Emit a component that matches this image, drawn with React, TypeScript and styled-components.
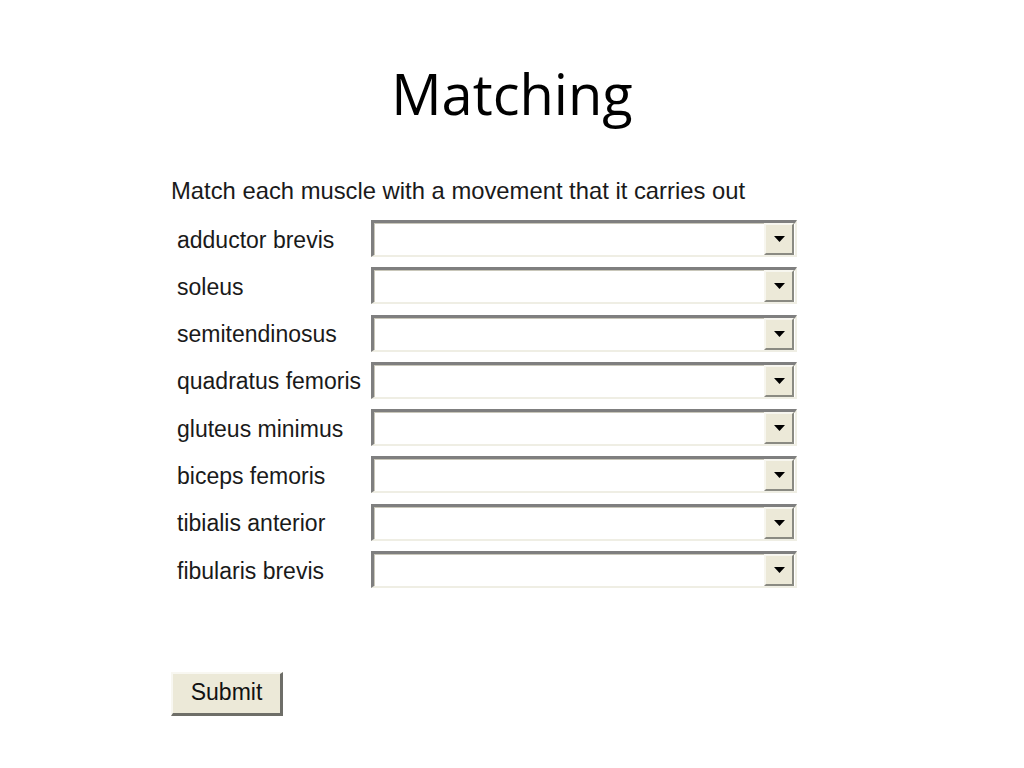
import React from "react";
import styled, { createGlobalStyle } from "styled-components";

const Global = createGlobalStyle`
  html, body { margin: 0; padding: 0; background: #ffffff; }
  body { width: 1024px; height: 768px; overflow: hidden; }
`;

const Page = styled.div`
  width: 1024px;
  height: 768px;
  display: flex;
  flex-direction: column;
`;

const Title = styled.h1`
  margin: 55px 0 0 0;
  font-family: "Open Sans", "Noto Sans", sans-serif;
  font-weight: 400;
  font-size: 56px;
  line-height: 76px;
  color: #000;
  text-align: center;
`;

const Form = styled.form`
  margin: 47px 0 0 171px;
  display: flex;
  flex-direction: column;
  font-family: "Liberation Sans", Arial, sans-serif;
  font-size: 23px;
  color: #1a1a1a;
`;

const Instruction = styled.div`
  font-size: 23.8px;
  line-height: 26px;
  height: 26px;
`;

const Grid = styled.div`
  margin-top: 16px;
  display: grid;
  grid-template-columns: 200px 426px;
  grid-auto-rows: 37px;
  row-gap: 10.3px;
`;

const Label = styled.label`
  padding-left: 6px;
  display: flex;
  align-items: center;
  padding-top: 3px;
  white-space: nowrap;
`;

const SelectBox = styled.div`
  box-sizing: border-box;
  height: 37px;
  display: flex;
  justify-content: flex-end;
  align-items: stretch;
  background: #ffffff;
  border-top: 3px solid #7f7f7f;
  border-left: 3px solid #7f7f7f;
  border-bottom: 2px solid #efeee4;
  border-right: 2px solid #efeee4;
  box-shadow: inset 1px 1px 0 #c9c7ba;
`;

const DropButton = styled.div`
  box-sizing: border-box;
  width: 30px;
  margin: 0 1px 0 0;
  background: #ece9d8;
  border-top: 2px solid #f7f6ef;
  border-left: 2px solid #f7f6ef;
  border-bottom: 2px solid #8a8a82;
  border-right: 2px solid #8a8a82;
  display: flex;
  align-items: center;
  justify-content: center;
`;

const SubmitButton = styled.button`
  margin-top: 84px;
  width: 112px;
  height: 44px;
  box-sizing: border-box;
  padding: 0 0 2px 0;
  font-family: "Liberation Sans", Arial, sans-serif;
  font-size: 23px;
  color: #111;
  background: #ece9d8;
  border-top: 2px solid #f8f7f1;
  border-left: 2px solid #f8f7f1;
  border-bottom: 3px solid #6e6e68;
  border-right: 3px solid #6e6e68;
  border-radius: 0;
`;

const muscles = [
  "adductor brevis",
  "soleus",
  "semitendinosus",
  "quadratus femoris",
  "gluteus minimus",
  "biceps femoris",
  "tibialis anterior",
  "fibularis brevis",
];

const Arrow = () => (
  <svg width="11" height="6" viewBox="0 0 11 6">
    <polygon points="0,0 11,0 5.5,6" fill="#000" />
  </svg>
);

export default function App() {
  return (
    <Page>
      <Global />
      <Title>Matching</Title>
      <Form onSubmit={(e) => e.preventDefault()}>
        <Instruction>Match each muscle with a movement that it carries out</Instruction>
        <Grid>
          {muscles.map((m) => (
            <React.Fragment key={m}>
              <Label>{m}</Label>
              <SelectBox>
                <DropButton>
                  <Arrow />
                </DropButton>
              </SelectBox>
            </React.Fragment>
          ))}
        </Grid>
        <div>
          <SubmitButton type="submit">Submit</SubmitButton>
        </div>
      </Form>
    </Page>
  );
}
